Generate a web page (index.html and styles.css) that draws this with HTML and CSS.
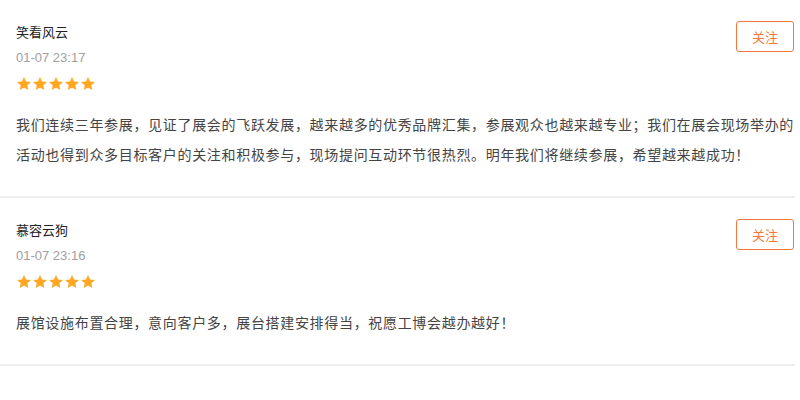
FILE: index.html
```
<!DOCTYPE html>
<html lang="zh-CN">

<head>
    <meta charset="UTF-8">
    <meta name="viewport" content="width=device-width, initial-scale=1.0">
    <title>评论</title>
    <link rel="stylesheet" href="styles.css">
</head>

<body>
    <ul class="comments">
        <li class="item">
            <div class="head">
                <div class="info">
                    <div class="name">笑看风云</div>
                    <div class="time">01-07 23:17</div>
                    <div class="stars">
                        <svg viewBox="0 0 24 24"><polygon points="12,1.5 15.1,8.2 22.4,8.9 16.9,13.8 18.5,21 12,17.3 5.5,21 7.1,13.8 1.6,8.9 8.9,8.2"/></svg>
                        <svg viewBox="0 0 24 24"><polygon points="12,1.5 15.1,8.2 22.4,8.9 16.9,13.8 18.5,21 12,17.3 5.5,21 7.1,13.8 1.6,8.9 8.9,8.2"/></svg>
                        <svg viewBox="0 0 24 24"><polygon points="12,1.5 15.1,8.2 22.4,8.9 16.9,13.8 18.5,21 12,17.3 5.5,21 7.1,13.8 1.6,8.9 8.9,8.2"/></svg>
                        <svg viewBox="0 0 24 24"><polygon points="12,1.5 15.1,8.2 22.4,8.9 16.9,13.8 18.5,21 12,17.3 5.5,21 7.1,13.8 1.6,8.9 8.9,8.2"/></svg>
                        <svg viewBox="0 0 24 24"><polygon points="12,1.5 15.1,8.2 22.4,8.9 16.9,13.8 18.5,21 12,17.3 5.5,21 7.1,13.8 1.6,8.9 8.9,8.2"/></svg>
                    </div>
                </div>
                <button class="follow">关注</button>
            </div>
            <p class="content">我们连续三年参展，见证了展会的飞跃发展，越来越多的优秀品牌汇集，参展观众也越来越专业；我们在展会现场举办的活动也得到众多目标客户的关注和积极参与，现场提问互动环节很热烈。明年我们将继续参展，希望越来越成功！</p>
        </li>
        <li class="item">
            <div class="head">
                <div class="info">
                    <div class="name">慕容云狗</div>
                    <div class="time">01-07 23:16</div>
                    <div class="stars">
                        <svg viewBox="0 0 24 24"><polygon points="12,1.5 15.1,8.2 22.4,8.9 16.9,13.8 18.5,21 12,17.3 5.5,21 7.1,13.8 1.6,8.9 8.9,8.2"/></svg>
                        <svg viewBox="0 0 24 24"><polygon points="12,1.5 15.1,8.2 22.4,8.9 16.9,13.8 18.5,21 12,17.3 5.5,21 7.1,13.8 1.6,8.9 8.9,8.2"/></svg>
                        <svg viewBox="0 0 24 24"><polygon points="12,1.5 15.1,8.2 22.4,8.9 16.9,13.8 18.5,21 12,17.3 5.5,21 7.1,13.8 1.6,8.9 8.9,8.2"/></svg>
                        <svg viewBox="0 0 24 24"><polygon points="12,1.5 15.1,8.2 22.4,8.9 16.9,13.8 18.5,21 12,17.3 5.5,21 7.1,13.8 1.6,8.9 8.9,8.2"/></svg>
                        <svg viewBox="0 0 24 24"><polygon points="12,1.5 15.1,8.2 22.4,8.9 16.9,13.8 18.5,21 12,17.3 5.5,21 7.1,13.8 1.6,8.9 8.9,8.2"/></svg>
                    </div>
                </div>
                <button class="follow">关注</button>
            </div>
            <p class="content">展馆设施布置合理，意向客户多，展台搭建安排得当，祝愿工博会越办越好！</p>
        </li>
    </ul>
</body>

</html>
```

FILE: styles.css
```
* {
    margin: 0;
    padding: 0;
    box-sizing: border-box;
}
body {
    background: #fff;
    font-family: "Liberation Sans", "Noto Sans CJK SC", sans-serif;
    color: #333;
}
.comments {
    list-style-type: none;
    margin-right: 5px;
}
.item {
    padding: 21px 0 27px 16px;
    border-bottom: 2px solid #eee;
}
.head {
    display: flex;
    justify-content: space-between;
    align-items: flex-start;
}
.name {
    margin-top: 2px;
    font-size: 13px;
    line-height: 20px;
    color: #222;
}
.time {
    margin-top: 5px;
    font-size: 13px;
    line-height: 20px;
    color: #a0a0a0;
}
.stars {
    display: flex;
    margin-top: 8px;
    height: 16px;
}
.stars svg {
    width: 16px;
    height: 16px;
    fill: #ffa722;
}
.follow {
    width: 58px;
    height: 31px;
    margin-right: 1px;
    background: #fff;
    border: 1px solid #f6773a;
    border-radius: 3px;
    color: #f6773a;
    font-family: "Noto Sans CJK SC", sans-serif;
    font-size: 13px;
    cursor: pointer;
}
.content {
    margin-top: 17px;
    font-family: "Noto Sans CJK SC", sans-serif;
    font-size: 14px;
    line-height: 30px;
    letter-spacing: 0.68px;
    color: #444;
}
```
